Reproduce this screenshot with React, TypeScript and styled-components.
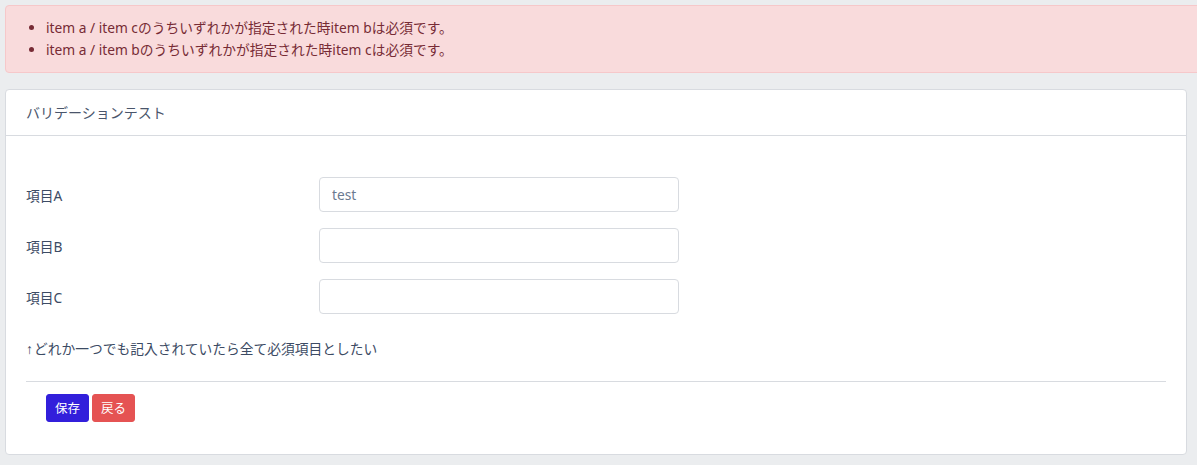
import React from "react";
import styled, { createGlobalStyle } from "styled-components";

const Global = createGlobalStyle`
  html, body { margin: 0; padding: 0; overflow: hidden; }
  body {
    background: #ebedef;
    font-family: "Noto Sans", "Noto Sans CJK JP", sans-serif;
    font-size: 14px;
    color: #3c4b64;
  }
`;

const Page = styled.div`
  padding: 5px 10px 10px 5px;
  display: flex;
  flex-direction: column;
  gap: 16px;
`;

const Alert = styled.div`
  background: #f9dbdc;
  border: 1px solid #f6c8ca;
  border-radius: 4px;
  color: #772b35;
  padding: 11px 20px 11px 20px;
  margin-right: -20px;
`;

const ErrList = styled.ul`
  margin: 0;
  padding-left: 20px;
  line-height: 22px;
  font-size: 13.75px;
`;

const Card = styled.div`
  background: #fff;
  border: 1px solid #d8dbe0;
  border-radius: 4px;
`;

const CardHeader = styled.div`
  padding: 12px 20px;
  line-height: 21px;
  border-bottom: 1px solid #d8dbe0;
  font-size: 14px;
  color: #4a556b;
`;

const CardBody = styled.div`
  padding: 41px 20px 32px 20px;
`;

const FormRow = styled.div`
  display: grid;
  grid-template-columns: 293px 360px;
  align-items: center;
  margin-bottom: 16px;
`;

const Label = styled.label`
  font-size: 13.75px;
  color: #3c4b64;
`;

const Input = styled.input`
  box-sizing: border-box;
  height: 35px;
  width: 360px;
  border: 1px solid #d8dbe0;
  border-radius: 4px;
  padding: 0 12px;
  font-family: "Noto Sans", "Noto Sans CJK JP", sans-serif;
  font-size: 13.75px;
  color: #6b7a90;
  outline: none;
  background: #fff;
`;

const Note = styled.p`
  margin: 24px 0 0 0;
  height: 21px;
  line-height: 21px;
  font-size: 13.75px;
`;

const Arrow = styled.span`
  font-family: "Liberation Sans", "DejaVu Sans", sans-serif;
  font-size: 14px;
  line-height: 0;
  color: #3c4b64;
  margin-right: 1px;
`;

const Divider = styled.hr`
  border: 0;
  border-top: 1px solid #d8dbe0;
  margin: 22px 0 12px 0;
`;

const Actions = styled.div`
  display: flex;
  gap: 3px;
  padding-left: 20px;
`;

const Button = styled.button<{ $variant: "primary" | "danger" }>`
  box-sizing: border-box;
  height: 28px;
  padding: 0 8px;
  border: 1px solid ${(p) => (p.$variant === "primary" ? "#321fdb" : "#e55353")};
  background: ${(p) => (p.$variant === "primary" ? "#321fdb" : "#e55353")};
  color: #fff;
  border-radius: 3px;
  font-family: "Noto Sans CJK JP", sans-serif;
  font-size: 12.5px;
  line-height: 18px;
  cursor: pointer;
`;

export default function App() {
  return (
    <>
      <Global />
      <Page>
        <Alert>
          <ErrList>
            <li>item a / item cのうちいずれかが指定された時item bは必須です。</li>
            <li>item a / item bのうちいずれかが指定された時item cは必須です。</li>
          </ErrList>
        </Alert>
        <Card>
          <CardHeader>バリデーションテスト</CardHeader>
          <CardBody>
            <FormRow>
              <Label>項目A</Label>
              <Input defaultValue="test" />
            </FormRow>
            <FormRow>
              <Label>項目B</Label>
              <Input />
            </FormRow>
            <FormRow>
              <Label>項目C</Label>
              <Input />
            </FormRow>
            <Note>
              <Arrow>↑</Arrow>どれか一つでも記入されていたら全て必須項目としたい
            </Note>
            <Divider />
            <Actions>
              <Button $variant="primary">保存</Button>
              <Button $variant="danger">戻る</Button>
            </Actions>
          </CardBody>
        </Card>
      </Page>
    </>
  );
}
